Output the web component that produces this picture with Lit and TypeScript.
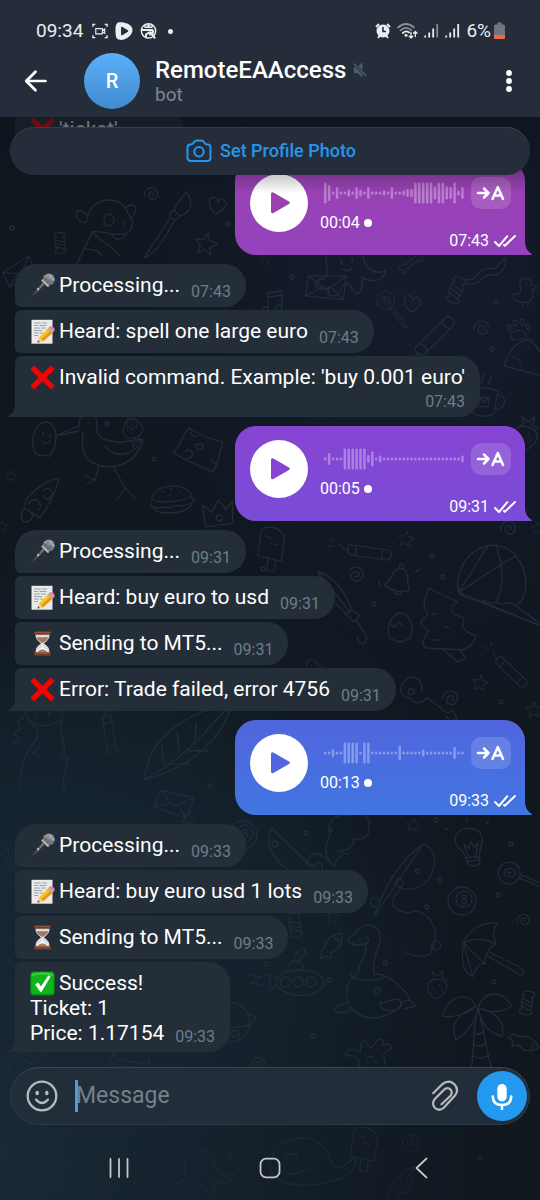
import { LitElement, html, svg, css, nothing } from "lit";
import type { TemplateResult } from "lit";
import { customElement, property } from "lit/decorators.js";
import { classMap } from "lit/directives/class-map.js";

/* ---------- emoji ---------- */

const emoji: Record<string, () => TemplateResult> = {
  mic: () => html`<svg viewBox="0 0 25 25" role="img" aria-label="microphone">
    <path d="M11.500 8 L17 13.500 L3.500 23.800 Q1.300 25.200 .4 24.400 Q-.2 23.500 1 21.500Z" fill="#2e2f32" />
    <path d="M12.500 9.500 L14.500 11.500 L2.500 23Z" fill="#6f7174" />
    <path d="M7.300 15.300 L9 17" stroke="#d4d7d9" stroke-width="1.300" />
    <circle cx="18.700" cy="6.600" r="6" fill="#777c80" />
    <path d="M14 3.500 Q17 0 21 1.300 Q24.700 4 24.300 8 Q18 6 14 3.500" fill="#a3a8ab" />
    <path d="M14 4 L21 12 M16 2 L23.500 10 M13 7 L18 12.500 M23 4 L16 11 M20 1.500 L14 8" stroke="#55595c" stroke-width=".6" />
    <path d="M12.300 7.300 L18 13" stroke="#b9bdc0" stroke-width="1.800" stroke-linecap="round" />
  </svg>`,
  memo: () => html`<svg viewBox="0 0 25 25" role="img" aria-label="memo">
    <rect x="1.500" y=".8" width="21" height="23.900" fill="#e9eaea" />
    <path d="M4 4h7m1 0h5M4 6.500h4m1.500 0h7M4 9h6m1 0h5M4 11.500h8M4 14h5m1 0h3M4 16.500h4" stroke="#8b8e90" stroke-width=".8" />
    <path d="M7.500 23.500 L9 18.500 L18 9.300 L22.500 13.700 L13 22.500Z" fill="#fbc22d" />
    <path d="M11 20.500 L20.200 11.500 L22.500 13.700 L13 22.500Z" fill="#e8971a" />
    <path d="M7.500 23.500 L9 18.500 L13 22.500Z" fill="#f0d3a4" />
    <path d="M7.500 23.500 L8.100 21.300 L9.700 22.900Z" fill="#3b3835" />
    <path d="M17.500 9.800 L18.700 8.500 L23.300 13 L22 14.300Z" fill="#9db4bd" />
    <path d="M18.700 8.500 L20 7.300 Q22 6.500 23.500 8.300 Q25.200 10 24.500 11.800 L23.300 13Z" fill="#f1868d" />
  </svg>`,
  cross: () => html`<svg viewBox="0 0 25 25" role="img" aria-label="cross mark">
    <path d="M.3 4.300 L4 .5 L12.500 8.700 L21 .5 L24.700 4.300 L16.300 12.500 L24.700 20.700 L21 24.500 L12.500 16.300 L4 24.500 L.3 20.700 L8.700 12.500Z" fill="#f00505" />
  </svg>`,
  hourglass: () => html`<svg viewBox="0 0 25 25" role="img" aria-label="hourglass">
    <path d="M5.500 3 H19.500 Q20 8.500 14 12.500 Q20 16 19.500 22 H5.500 Q5 16 11 12.500 Q5 8.500 5.500 3Z" fill="#d5dde1" />
    <path d="M6.500 6.300 H18.500 Q17.300 9.700 12.500 12 Q7.700 9.700 6.500 6.300Z" fill="#a9745a" />
    <path d="M12.500 11.500 L13.200 17 Q17.500 18 18.300 21.500 H6.700 Q7.500 18 11.800 17Z" fill="#fff" />
    <path d="M7 21.500 Q12.500 15 18 21.500Z" fill="#b17b5c" />
    <rect x="4" y=".4" width="17" height="3.300" rx="1.300" fill="#6e3c27" />
    <rect x="4" y="21.300" width="17" height="3.400" rx="1.300" fill="#6e3c27" />
    <path d="M5 1.300H20M5 22.200H20" stroke="#a96946" stroke-width=".7" />
  </svg>`,
  check: () => html`<svg viewBox="0 0 25 25" role="img" aria-label="check mark">
    <rect x=".3" y=".4" width="24.400" height="24.200" rx="3.500" fill="#078a10" />
    <rect x="1.300" y="1" width="22.400" height="22.300" rx="3" fill="#0eb41a" />
    <path d="M2 3 Q12 0 23 3 V5 Q12 2 2 5Z" fill="#5edc5e" opacity=".6" />
    <path d="M5 13.500 L8.300 11.500 L10.900 15.500 L18.300 4.600 L20.500 5.700 L11.600 20.700 H10.200Z" fill="#fff" />
  </svg>`,
};

/* ---------- wallpaper ---------- */

type Spot = [x: number, y: number, turn?: number, size?: number];

const shapes: Record<string, string> = {
  dot: "M-2 0a2 2 0 1 0 4 0a2 2 0 1 0-4 0",
  star: "M0-11L3-4L11-3L5 3L7 10L0 6L-7 10L-5 3L-11-3L-3-4Z",
  heart: "M0 8C-12 0-9-8-4-8C-1-8 0-5 0-4C1-7 4-8 6-7C11-4 8 3 0 8Z",
  swirl: "M-7 3C-8-5-1-9 4-6C10-2 7 6 2 6C-3 6-4 0-1-2C2-4 5 0 2 2",
  candy: "M-4-8C-8-6-8-12-3-13L4-13C8-12 8-6 4-8C7-3 7 3 4 8C8 7 8 12 3 13H-3C-8 12-8 7-4 8C-7 3-7-3-4-8M-5-4L5-1M-6 0L6 4M-5 4L4 8",
  fish: "M-14 3L-8 0C-4-8 5-10 12-8C13-1 7 7-3 6L-6 12L-9 8L-15 9ZM6-9C4-5 6-2 10-1M8-5v.5",
  bone: "M-12-4C-17-12-6-13-7-6L9 4C14 1 18 8 12 9C13 15 5 16 5 9L-10-1C-16 2-18-3-12-4",
  lolly: "M-12-12a11 11 0 1 0 22 0a11 11 0 1 0-22 0M-6-12C-6-18 4-18 5-11C5-6-3-6-3-11C-2-15 2-12 0-11M5-3L24 22M8-5L27 20L24 22",
  burger: "M-20-3C-18-18 16-18 20-2C14 3-14 3-20-3M-21 0C-24 6-18 5-14 7C-8 4-5 9 0 7C6 4 9 9 13 6C20 6 24 3 20-1M-19 6C-18 14 16 16 19 6M-8-9h1M0-11h1M8-8h1M-2-5h1",
  pizza: "M-16 6C-16-2 4-16 21-18C17-4 8 8-2 20L-17 8M-12 5a6 6 0 1 1 9 7M4-7a5 5 0 1 1-1 5M-16 8C-24 15-20 25-14 22C-8 20-9 14-11 13",
  bell: "M-12 6C-4 3-8-11 2-12C13-12 9 3 14 8C7 12-5 12-12 6ZM-2 10C0 16 6 14 6 11M1-12C-1-18 5-18 5-12M-18 4L-16 8M17-10l4-4",
  mug: "M-12-10C-6-13 10-13 14-10L12 13C6 17-6 17-10 13ZM14-6C25-9 24 9 12 8M-4-2L5-3L6 6L-4 7ZM-4-2L1 2L5-3M-3-16C-6-20 0-22-3-26M5-16C2-20 8-22 5-26",
  envelope: "M-20-8L18-10L16 14L-22 12ZM-20-8L-1 5L18-10M-22 12L-6 3M16 14L4 3",
  berry: "M-12-3C-8-11 6-12 12-4C14 6 4 14-1 15C-9 12-13 4-12-3M-9-7L-3-12L-6-19L1-14L7-20L6-12L12-9M-5 0v2M3-3v2M-1 6v2M6 3v2",
  paw: "M-7 6C-8 0 6-2 8 5C8 11 3 8 0 9C-3 10-6 11-7 6M-11-2a2 3 0 1 0 4 0a2 3 0 1 0-4 0M-5-7a2 3 0 1 0 4 0a2 3 0 1 0-4 0M2-8a2 3 0 1 0 4 0a2 3 0 1 0-4 0M8-3a2 3 0 1 0 4 0a2 3 0 1 0-4 0",
  planet: "M-18 0a18 18 0 1 0 36 0a18 18 0 1 0-36 0M-17-6C-30-2-22 8-3 6C18 3 32-8 16-9M-8-10a3 3 0 1 0 6 0a3 3 0 1 0-6 0M2 10a4 3 0 1 0 8 0a4 3 0 1 0-8 0",
  bulb: "M-6 12C-5 6-15 2-14-7C-13-21 13-20 13-5C13 3 7 6 8 13ZM-6 12L-4 19C-2 22 6 22 7 19L8 13M-5 16H8M-3 11L-6-1L-1 3L1-3L4 3L8-1L4 12M-20-18l-3-3M0-24v-4M19-18l3-3",
  ball: "M-14 0a14 14 0 1 0 28 0a14 14 0 1 0-28 0M-6-2a8 8 0 1 0 16 0a8 8 0 1 0-16 0M2-2a2 2 0 1 0 .1-4a2 2 0 1 0 0 4a2.500 2.500 0 1 0 .1 0",
  brolly: "M-17 4C-20-16 0-32 22-30C14-18 18-12 20-6C12-4 8 4 8 16C2 12-2 20-6 30C-18 24-18 12-17 4ZM-16-8L8 16M-16-8C-4-14 10-12 20-6M-16-8L-6 30M12 2L46 19C54 22 50 32 44 26L10 6",
  nessie: "M-14 8C-14-2-6-10-6-20C-6-24-10-22-14-21C-26-20-26-31-16-32C-12-46 10-44 8-26C4-10 0-4 2 8C18 8 34 24 38 34C26 34 32 42 24 44C4 58-18 52-24 36C-28 26-24 12-14 8M-20 8C-30 14 18 18 10 8M-24 36L-38 42C-36 50-24 46-20 44M8 36C14 40 20 30 28 34C32 46 16 48 8 40ZM38 34L44 40L32 43M2 25a3 3 0 1 0 6 0a3 3 0 1 0-6 0M-12-27v3M-6-30l3 3M-20-23C-14-20-6-21-3-25",
  sub: "M-24 0C-22-16 22-16 24 0C22 18-20 18-24 0ZM-12-12C-14-24 4-24 3-12M-6-20C-6-28-2-32 4-34L6-28C2-27 0-24-1-20M-24-4L-30-7V8L-24 4M-20 0a5 5 0 1 0 10 0a5 5 0 1 0-10 0M-7 0a5 5 0 1 0 10 0a5 5 0 1 0-10 0M6 0a5 5 0 1 0 10 0a5 5 0 1 0-10 0M-52-6q4-3 7 0t7 0t6 0M-50 2q4-3 7 0t7 0",
  palm: "M-5 60C-1 40-4 20 2-2C8 20 10 40 16 60M0-4C-8-20-28-14-34 6C-22 8-8 4 0-4C-20 6-26 14-20 30C-8 22 0 10 2-2C8-20 26-20 36-4C24 4 10 2 2-2C20 2 30 12 26 26C12 24 4 10 2-2M-3 22C2 26 6 24 8 20M-3 34C2 38 8 36 10 32M-3 46C4 50 10 48 13 44",
  stork: "M-14-22C-16-38 6-38 4-22C2-8 14-8 24-6C36-4 44-12 50-8C46 10 28 22 8 18C-10 14-12 0-10-16M-14-22L-38-12L-14-17M12-2C24 12 40 6 46-4M6 18L2 32L-8 28M2 32L-6 36M20 18L32 40L42 50M32 40L24 52M-4-26v1",
  dog: "M-18-6C-12-28 18-26 22-8C30-2 26 14 16 12C4 14-4 8-14 10C-22 30-30 40-34 54M-18-6C-30-20-34-4-24 0C-20 2-18-2-18-6M20-14C30-24 34-8 24-4M-2-2a5 6 0 1 0 10 0a5 6 0 1 0-10 0M18 0v3M6 12C8 20 20 18 20 10M-14 10C-4 20 8 26 14 34M-22 26C-12 30-8 26-4 34",
  brush: "M16-34C24-24 22-14 10-10L4-16C6-24 12-26 16-34ZM4-16C0-14-1-10 0-8C4-5 8-6 10-10M0-8L-26 32C-16 28-8 18 4-5",
  ghost: "M-8 14C-16 0-12-18 0-18C12-16 14 6 6 16C2 12-2 20-8 14ZM-3-8v3M4-7v3M-3 1C0 5 4 3 5 0",
  pillow: "M-24 2C-14-6-16-14-8-22C2-16 14-10 26-8C22 2 24 8 16 22C6 16-8 14-24 2ZM-6-18a5 5 0 0 0 7 4M2 0C-4-4-2-8 2-5C6-8 9-3 2 0M-12 2a4 4 0 1 1 3 6M14 8a5 5 0 0 0 5 5",
  tree: "M-12-42L18-28C10-24 10-20 14-16L24-12C22-4 20 0 36 6C34 14 30 18 22 20L-14 18C-22 12-12 6-12 0C-24-6-18-10-12-16C-20-28-14-30-12-42M4 20L18 32L26 28L20 20M-8-16h5M4-4l5 2M-6 10h5",
  chute: "M-34 16C-38-26 4-44 24-20C40 0 34 24 24 30C16 22 12 32 4 26C-2 30-6 22-12 26C-20 22-26 24-34 16ZM-34 16C-20-2-12-20-4-30M24-20C-4-6-20 10-34 16M4-32C12-6 12 10 4 26M-34 16L54 52M-12 26L54 52M24 30L54 52",
  tube: "M-22-7L20-3C26-1 24 8 18 8L-22 4C-26 2-26-6-22-7M-18-7C-14-4-14 2-18 4M16-3C12 0 12 6 16 8M-24-2C-32 2-32-10-36-6M-40-10l-4-3M-42-4h-4",
  closed: "M-32-34C-20-32-6-18 2 4L-4 8C-20-8-30-22-32-34ZM-32-34L0 6M-4 8L4 16L10 10L2 4M6 14C14 26 22 34 12 38C6 36 8 30 8 30",
  boat: "M-28-34C-36-20-30-6-12 8M-28-34L10 4M-25-30L14 6M-28-18a3 3 0 1 0 6 0a3 3 0 1 0-6 0M6 2C12-14 20-8 28-2L34 4M34 4C38-6 44-10 48-8M14 6C14-2 24-2 22 8M28-2C22-16 30-22 30-28C24-44 44-50 50-46C64-54 74-40 68-34C72-26 58-20 54-24C54-12 44-12 38-10",
  rod: "M-40 44C-28 10-12-18 14-36C32-34 32-2 12 10C-8 20-24 6-12 2C-2 4-12 16-18 22C-24 36-6 42 4 38C18 38 36 54 24 82C20 92-2 88-6 82M-40 44L14-36M24 76a5 5 0 1 0 10 0a5 5 0 1 0-10 0M-44 28a5 5 0 1 0 10 0a5 5 0 1 0-10 0",
  dino: "M-20-30C-10-44 16-40 18-26C12-16 18-4 20 10C26 24 14 36 20 50M-20-30C-14-12-6-20-8-4C-18 10-28 24-24 50M-8-28v3M4-30v3M-12-20C-4-14 10-16 14-22M-22-24l-6 4l4 6l-7 5l5 6l-6 6M-4 4l-8 8l6 2M16 12l8 6",
  leaf: "M-40 34C-36 0-10-24 40-36C32-2 2 24-40 34ZM-40 34C-10 20 14-6 40-36M-22 20l-2-18M-8 10l-2-18M6-2l2-16M-18 20l18 0M0 8h18",
  guitar: "M-8 10C-20 10-24 24-14 28C-8 34 2 30 2 20C8 14 4 6-2 4L10-20L6-24L14-30L18-24L12-18M-8 20a3 3 0 1 0 6 0a3 3 0 1 0-6 0",
  octo: "M-14 6C-24-20 12-30 16-4C18 6 30 8 34 4C32 16 20 14 14 10C16 22 10 28 6 20C2 12-2 16-4 22C-10 30-18 24-12 18C-22 24-30 14-20 12C-16 12-16 8-14 6M-3-4v3M6-5v3M-2 3C2 6 5 4 6 2",
  whale: "M-34 10C-40-14-4-34 18-14C26-6 24 6 34 8C44 4 46-2 52-2C50 10 42 18 30 20C6 28-28 28-34 10M-20-2C-18-8-10-8-8-2M-30 12C-16 16-4 14 4 8M-20-8v2M-8-8v2",
  pop: "M-12-16C-4-24 12-18 14-8L10 18L-16 12ZM-4 14L-6 28L2 30L4 16M-8-10l8 2M-2-2l8 2",
  note: "M-6 6V-10L8-12V4M-12 7a3 3 0 1 0 6 0a3 3 0 1 0-6 0M2 5a3 3 0 1 0 6 0a3 3 0 1 0-6 0M-6-6L8-8",
  duck: "M-10 4C-4 6-2 0-4-4C-6-14 8-14 8-5C14-4 14-1 8-1C12 6 6 14-2 12C-8 12-12 10-10 4M2-6v1M-2 12v4M4 12v4",
  ribbon: "M-18 12C-6 14-10-2 4-2C14-2 12-14 18-14C20-4 14 4 6 4C-4 4-2 18-18 16Z",
  fin: "M-22 6C-16-12-8-20 4-20C14-12 22 4 24 18L-22 6M2-14v2M-14-4C-8 0-4 0-4 6",
  crown: "M-14 14L-16-8L-7 0L0-12L7-2L14-10L13 12ZM-3 6a3 3 0 1 0 6 0a3 3 0 1 0-6 0",
  egg: "M-12 4C-12-8-4-15 1-15C8-15 13-4 12 4C10 17-10 17-12 4M-10-4l4 3l4-5l5 4",
};

const wallpaper: Record<string, Spot[]> = {
  dot: [[12, 228], [228, 224], [292, 277], [485, 250], [496, 302], [492, 349], [107, 424], [154, 459], [263, 569], [432, 556], [374, 604], [443, 577], [501, 702], [306, 833], [330, 830], [436, 820], [511, 844], [417, 871], [440, 880], [427, 907], [498, 895], [385, 963], [266, 964], [329, 980], [313, 1036], [494, 982], [10, 960], [114, 1053], [50, 1139], [210, 786], [500, 758], [230, 1157], [480, 1158]],
  star: [[206, 244, 12], [406, 539, 8, 0.7], [480, 683, 10, 0.7], [413, 825, 10, 0.6], [333, 917, 10, 0.6], [11, 476, 0, 0.5], [2, 526, 0, 0.5], [537, 528, 0, 0.5], [534, 710, 0, 0.7], [188, 818, 20, 0.6]],
  heart: [[217, 206, 10], [412, 304, 8], [132, 424, 0, 0.7]],
  swirl: [[151, 194, 0, 0.9], [481, 328], [356, 574, 60], [450, 698, 20], [523, 920, 0, 0.8], [508, 528], [258, 1064, 0, 0.9], [15, 1190, 30]],
  candy: [[60, 243, -4, 0.8], [295, 925, -8, 0.9], [527, 1003, 10, 0.9], [456, 290, 20]],
  fish: [[332, 945, -20], [525, 1043, 50]],
  bone: [[410, 262, -70, 0.8], [262, 256, 20, 0.6], [10, 860, 30, 0.7]],
  lolly: [[386, 310, 2, 0.8], [516, 883, -30]],
  burger: [[172, 500, -6], [130, 1060, 10]],
  pizza: [[40, 498, -6], [22, 1060, 20, 0.8]],
  bell: [[397, 580, 8]],
  mug: [[483, 400, 6]],
  envelope: [[328, 285, 3], [176, 802, 16, 0.9], [20, 270, -30, 0.8]],
  berry: [[525, 436, 8], [88, 1133, 0, 0.7], [437, 987, 0, 0.8], [133, 430, 160, 0.8]],
  paw: [[518, 330]],
  planet: [[230, 1022, 8, 1.1]],
  bulb: [[470, 845, -8]],
  ball: [[462, 901], [411, 1143, 0, 0.6], [243, 835, 0]],
  brolly: [[478, 950, 0, 0.9]],
  nessie: [[372, 966]],
  sub: [[300, 982]],
  palm: [[476, 1010]],
  stork: [[93, 448]],
  dog: [[106, 222]],
  brush: [[170, 226]],
  ghost: [[45, 440, 10]],
  pillow: [[197, 450]],
  crown: [[219, 512, -4]],
  egg: [[400, 628]],
  tree: [[440, 630]],
  chute: [[492, 576]],
  tube: [[370, 552, 3, 0.9], [435, 335, -50], [512, 672, 38, 0.8], [110, 735, 75, 0.8]],
  closed: [[350, 606]],
  boat: [[300, 862]],
  rod: [[410, 877, 0, 0.9]],
  dino: [[45, 742]],
  leaf: [[188, 742, 0, 1.1], [400, 1190, -20, 0.5]],
  guitar: [[430, 700, 100]],
  octo: [[200, 1170], [345, 265, 0, 1.2], [372, 1060, 180, 0.8]],
  whale: [[305, 1160], [80, 1180, 0, 0.7]],
  pop: [[365, 1145, 0, 0.9], [272, 545, 0, 0.9]],
  note: [[274, 303]],
  duck: [[524, 290], [25, 1155], [310, 670, 0, 0.9]],
  ribbon: [[486, 270, 8]],
  fin: [[526, 360]],
};

@customElement("chat-wallpaper")
export class ChatWallpaper extends LitElement {
  static styles = css`
    :host { display: block; }
    svg { display: block; width: 100%; height: 100%; }
    g { fill: none; stroke: #202d39; stroke-width: 1.300; stroke-linecap: round; stroke-linejoin: round; }
    .faint { stroke: #1b2933; }
  `;

  render() {
    return html`<svg viewBox="0 0 540 1200" preserveAspectRatio="xMidYMid slice" aria-hidden="true">
      <g>
        ${Object.entries(wallpaper).flatMap(([name, spots]) =>
          spots.map(
            ([x, y, turn = 0, size = 1]) => svg`<path
              class=${y > 1126 ? "faint" : "line"}
              d=${shapes[name]}
              transform="translate(${x} ${y}) rotate(${turn}) scale(${size})"
            />`
          )
        )}
      </g>
    </svg>`;
  }
}

/* ---------- text message ---------- */

interface TextMessage {
  kind: "text";
  icon: string;
  lines: string[];
  time: string;
  place: "first" | "middle" | "last";
  wrapTime?: boolean;
}

interface VoiceMessage {
  kind: "voice";
  length: string;
  time: string;
  tone: "magenta" | "violet" | "blue";
  wave: number[];
}

@customElement("text-message")
export class TextMessageElement extends LitElement {
  @property({ attribute: false }) message!: TextMessage;

  static styles = css`
    :host { display: block; max-width: 94%; }
    .bubble {
      position: relative;
      display: flex;
      gap: 11px;
      box-sizing: border-box;
      min-height: 43px;
      padding: 9px 15px 6px;
      border-radius: 6px 21px 21px 6px;
      background: #232e39;
      color: #fff;
      font-size: 21px;
      line-height: 25px;
    }
    .first { border-top-left-radius: 21px; }
    .last { border-bottom-left-radius: 0; }
    .wrap { flex-direction: column; gap: 3px; }
    p { margin: 0; }
    .line { display: flex; gap: 4px; }
    .line svg { flex: none; width: 25px; height: 25px; }
    time {
      align-self: flex-end;
      font-size: 16px;
      line-height: 18px;
      color: #6f7c88;
    }
    .tail {
      position: absolute;
      left: -7px;
      bottom: 0;
      width: 7px;
      height: 12px;
      fill: #232e39;
    }
  `;

  render() {
    const { icon, lines, time, place, wrapTime } = this.message;
    return html`<div class=${classMap({ bubble: true, [place]: true, wrap: !!wrapTime })}>
      <div>
        ${lines.map(
          (line, i) => html`<p class="line">${i === 0 ? emoji[icon]() : nothing}<span>${line}</span></p>`
        )}
      </div>
      <time>${time}</time>
      ${place === "last"
        ? html`<svg class="tail" viewBox="0 0 7 12" aria-hidden="true"><path d="M7 0 C7 6 4 9 0 11 Q0 12 1 12 H7Z" /></svg>`
        : nothing}
    </div>`;
  }
}

/* ---------- voice message ---------- */

@customElement("voice-message")
export class VoiceMessageElement extends LitElement {
  @property({ attribute: false }) message!: VoiceMessage;

  static styles = css`
    :host { display: block; width: 290px; }
    .bubble {
      position: relative;
      box-sizing: border-box;
      padding: 14px 14px 5px 15px;
      border-radius: 21px 21px 0 21px;
      background: linear-gradient(var(--from), var(--to));
      color: #fff;
      font-size: 16px;
      line-height: 18px;
    }
    .magenta { --from: #9c40b0; --to: #9343bd; }
    .violet { --from: #8744d2; --to: #794dd7; }
    .blue { --from: #5166de; --to: #4175e0; }
    .row { display: flex; align-items: flex-start; }
    button {
      display: block;
      flex: none;
      padding: 0;
      border: 0;
      cursor: pointer;
    }
    .play { width: 58px; height: 58px; border-radius: 50%; background: #fff; }
    .play svg { display: block; width: 58px; height: 58px; fill: var(--from); }
    .track { flex: 1; display: flex; flex-direction: column; gap: 5px; padding: 3px 0 0 12px; }
    .wave { display: block; width: 145px; height: 32px; fill: #fff; fill-opacity: .33; }
    .length { display: flex; align-items: center; gap: 4px; }
    .unheard { width: 8px; height: 8px; border-radius: 50%; background: #fff; }
    .transcribe { width: 40px; height: 32px; margin-top: 3px; border-radius: 10px; background: rgba(255, 255, 255, .15); }
    .transcribe svg { display: block; width: 40px; height: 32px; fill: none; stroke: #fff; stroke-width: 2.500; stroke-linecap: round; stroke-linejoin: round; }
    .meta { display: flex; justify-content: flex-end; align-items: center; gap: 5px; margin-right: -5px; }
    .ticks { width: 22px; height: 14px; fill: none; stroke: #fff; stroke-width: 2; stroke-linecap: round; stroke-linejoin: round; }
    .tail { position: absolute; right: -7px; bottom: 0; width: 7px; height: 14px; fill: var(--to); }
  `;

  render() {
    const { length, time, tone, wave } = this.message;
    return html`<div class="bubble ${tone}">
      <div class="row">
        <button class="play" aria-label="Play voice message">
          <svg viewBox="0 0 58 58"><path d="M21 20 Q21 17.500 23.300 18.500 L39 27.500 Q40.800 28.700 39 30 L23.300 39 Q21 40 21 37.500Z" /></svg>
        </button>
        <div class="track">
          <svg class="wave" viewBox="0 0 145 32" aria-hidden="true">
            ${wave.map(
              (h, i) => svg`<rect x=${4 + i * 3.92} y=${16 - h / 2} width="2.500" height=${h} rx="1.200" />`
            )}
          </svg>
          <div class="length"><span>${length}</span><span class="unheard"></span></div>
        </div>
        <button class="transcribe" aria-label="Transcribe">
          <svg viewBox="0 0 40 32"><path d="M7 16H17.500M13 11.500L17.500 16L13 20.500M21.500 22L26.800 10L32 22M23.500 18.500H30" /></svg>
        </button>
      </div>
      <div class="meta">
        <time>${time}</time>
        <svg class="ticks" viewBox="0 0 22 14" role="img" aria-label="Read"><path d="M1 8L5 12L13.300 2.200M10 11L10.800 11.800L21 2" /></svg>
      </div>
      <svg class="tail" viewBox="0 0 7 14" aria-hidden="true"><path d="M0 0 C0 7 3 11 7 13 Q7 14 6 14 H0Z" /></svg>
    </div>`;
  }
}

/* ---------- status bar ---------- */

@customElement("status-bar")
export class StatusBar extends LitElement {
  static styles = css`
    :host {
      display: flex;
      justify-content: space-between;
      padding: 17px 35px 0 36px;
      height: 28px;
      font-size: 19px;
      line-height: 28px;
      color: #eceef0;
    }
    div { display: flex; align-items: center; }
    svg { display: block; height: 20px; fill: none; stroke: #eceef0; }
    .left { gap: 7px; }
    .shot { margin-left: 2px; }
    .dot { width: 5px; height: 5px; margin-left: 4px; border-radius: 50%; background: #eceef0; }
    .right { gap: 6px; }
    .battery { margin-left: -3px; }
  `;

  render() {
    const bars = (last: string) => html`<svg width="15" viewBox="0 0 15 20">
      <path d="M1.200 16.500V14.500M5.200 16.500V11.500M9.200 16.500V7.500" stroke-width="1.800" />
      <path d="M13.200 16.500V3" stroke-width="1.800" stroke=${last} />
    </svg>`;
    return html`
      <div class="left">
        <span>09:34</span>
        <svg class="shot" width="16" viewBox="0 0 17 20" stroke-width="1.200">
          <path d="M1 5.500V3H3.500M13.500 3H16V5.500M16 14.500V17H13.500M3.500 17H1V14.500" stroke-width="1.500" />
          <path d="M4 7.500H11V13H4ZM11 9.500L13.500 8V12.500L11 11" />
        </svg>
        <svg width="18" viewBox="0 0 18 20">
          <path d="M3 1.500C8 .5 16 2.500 17.300 7.500C18.500 12 14 17 9 18.500C5 19.500 1 19 .7 14C.3 9 0 3 3 1.500Z" fill="#eceef0" stroke="none" />
          <path d="M6.800 6.500L12.500 10L6.800 13.500Z" fill="#262d3a" stroke="#262d3a" stroke-width="1.500" stroke-linejoin="round" />
        </svg>
        <svg width="17" viewBox="0 0 17 20">
          <circle cx="8.500" cy="9.800" r="7.200" stroke-width="1.400" />
          <path d="M4 4.500Q8.500 1.500 13 4.500L12.500 7H4.500Z" fill="#eceef0" stroke="none" />
          <path d="M2 9H12Q13.500 9.500 13 11.500L9 11.500L6 13.500V16M9 13.500H12.500L15 17.500" stroke-width="2" />
          <path d="M5.500 5H7.500M9.500 5H11.500" stroke="#262d3a" stroke-width="1" />
        </svg>
        <span class="dot"></span>
      </div>
      <div class="right">
        <svg width="16" viewBox="0 0 16 20">
          <circle cx="8" cy="10" r="6.500" fill="#eceef0" stroke="none" />
          <path d="M8 6V10.500H11" stroke="#262d3a" stroke-width="1.600" />
          <path d="M1 6L4 3M15 6L12 3M3 17L4.500 15M13 17L11.500 15" stroke-width="2" />
        </svg>
        <svg width="21" viewBox="0 0 21 20" stroke-linecap="round">
          <path d="M1 6.500Q9 -.5 17 6.500M3.500 9.300Q9 4.500 14.500 9.300" stroke="#8b9097" stroke-width="1.700" />
          <path d="M5.800 12Q9 9 12 11.500" stroke-width="1.800" />
          <circle cx="9" cy="14.300" r="1.500" fill="#eceef0" stroke="none" />
          <path d="M14 11.500V17M12.300 15.300L14 17L15.700 15.300M18.300 15.500V10.500M16.600 12.200L18.300 10.500L20 12.200" stroke-width="1.300" />
        </svg>
        ${bars("#858b93")} ${bars("#eceef0")}
        <span>6%</span>
        <svg class="battery" width="11" viewBox="0 0 11 20">
          <path d="M3.500 1.500H7.500V3.500H9.500Q11 3.500 11 5V14H0V5Q0 3.500 1.500 3.500H3.500Z" fill="#70767f" stroke="none" />
          <path d="M0 14H11V17Q11 18 10 18H1Q0 18 0 17Z" fill="#f0683c" stroke="none" />
        </svg>
      </div>`;
  }
}

/* ---------- page ---------- */

const rep = (h: number, n: number): number[] => Array(n).fill(h);

const conversation: (TextMessage | VoiceMessage)[] = [
  {
    kind: "voice", length: "00:04", time: "07:43", tone: "magenta",
    wave: [21, 16, 3, 12, 3, 3, 7, 3, 12, 7, 3, 12, 3, 3, 3, 5, 3, 12, 3, 3, 5, 8, 8, 21, 21, 21, 21, 21, 13, 21, 21, 13, 12, 21, 5, 12],
  },
  { kind: "text", icon: "mic", lines: ["Processing..."], time: "07:43", place: "first" },
  { kind: "text", icon: "memo", lines: ["Heard: spell one large euro"], time: "07:43", place: "middle" },
  { kind: "text", icon: "cross", lines: ["Invalid command. Example: 'buy 0.001 euro'"], time: "07:43", place: "last", wrapTime: true },
  {
    kind: "voice", length: "00:05", time: "09:31", tone: "violet",
    wave: [3, 12, 3, 3, 3, ...rep(21, 6), 8, 15, 3, 7, ...rep(3, 20), 7],
  },
  { kind: "text", icon: "mic", lines: ["Processing..."], time: "09:31", place: "first" },
  { kind: "text", icon: "memo", lines: ["Heard: buy euro to usd"], time: "09:31", place: "middle" },
  { kind: "text", icon: "hourglass", lines: ["Sending to MT5..."], time: "09:31", place: "middle" },
  { kind: "text", icon: "cross", lines: ["Error: Trade failed, error 4756"], time: "09:31", place: "last" },
  {
    kind: "voice", length: "00:13", time: "09:33", tone: "blue",
    wave: [3, 3, 8, 3, 3, ...rep(21, 4), 3, 21, 21, ...rep(3, 7), 15, ...rep(3, 5), 7, ...rep(3, 7), 12, 3, 3],
  },
  { kind: "text", icon: "mic", lines: ["Processing..."], time: "09:33", place: "first" },
  { kind: "text", icon: "memo", lines: ["Heard: buy euro usd 1 lots"], time: "09:33", place: "middle" },
  { kind: "text", icon: "hourglass", lines: ["Sending to MT5..."], time: "09:33", place: "middle" },
  { kind: "text", icon: "check", lines: ["Success!", "Ticket: 1", "Price: 1.17154"], time: "09:33", place: "last" },
];

const earlier: TextMessage = { kind: "text", icon: "cross", lines: ["'ticket'"], time: "07:42", place: "last" };

@customElement("app-root")
export class AppRoot extends LitElement {
  static styles = css`
    :host {
      position: relative;
      display: flex;
      flex-direction: column;
      height: 100vh;
      overflow: hidden;
      font-family: Roboto, "Noto Sans", sans-serif;
      background:
        radial-gradient(ellipse 90% 40% at 0% 96%, #192936 0%, transparent 100%),
        radial-gradient(ellipse 55% 40% at 75% 22%, #151b2c 0%, transparent 100%),
        radial-gradient(ellipse 80% 26% at 10% 72%, #152430 0%, transparent 100%),
        #10171f;
    }
    button { display: block; padding: 0; border: 0; background: none; cursor: pointer; }
    svg { display: block; }
    chat-wallpaper { position: absolute; inset: 0; }

    .top { position: relative; flex: none; background: #262d3a; }
    header { display: flex; align-items: center; height: 72px; padding: 0 19px 0 24px; color: #fff; }
    .back svg { width: 24px; height: 24px; }
    .avatar {
      display: grid;
      place-items: center;
      width: 56px;
      height: 56px;
      margin: 0 15px 0 36px;
      border-radius: 50%;
      background: linear-gradient(#5caffa, #408acf);
      font-size: 20px;
      font-weight: 500;
    }
    .who { flex: 1; display: flex; flex-direction: column; padding-top: 2px; }
    h1 { display: flex; align-items: center; gap: 7px; margin: 0; font-size: 24px; line-height: 26px; font-weight: 500; }
    h1 svg { width: 14px; height: 16px; }
    .kind { font-size: 19px; line-height: 24px; color: #7a8894; }
    .more svg { width: 24px; height: 24px; fill: #fff; }

    main {
      position: relative;
      flex: 1;
      min-height: 0;
      display: flex;
      flex-direction: column;
      justify-content: flex-end;
      overflow: hidden;
      padding: 0 15px 15px;
    }
    ol { display: flex; flex-direction: column; gap: 3px; margin: 0; padding: 0; list-style: none; }
    li { display: flex; }
    .mine { justify-content: flex-end; margin: 6px 0; }
    .shade {
      position: absolute;
      inset: 0 0 auto;
      height: 76px;
      background: linear-gradient(rgba(15, 20, 29, .65), rgba(15, 20, 29, .3) 70%, transparent);
    }
    .photo {
      position: absolute;
      top: 10px;
      left: 10px;
      right: 10px;
      display: flex;
      align-items: center;
      justify-content: center;
      gap: 8px;
      height: 48px;
      padding-left: 2px;
      border-radius: 24px;
      background: #262d3a;
      box-shadow: inset 0 1px #373e4a;
      font: 500 18px/24px Roboto, "Noto Sans", sans-serif;
      color: #2398ee;
    }
    .photo svg { width: 26px; height: 24px; fill: none; stroke: #2398ee; stroke-width: 2; stroke-linejoin: round; }

    .composer {
      position: relative;
      flex: none;
      display: flex;
      align-items: center;
      box-sizing: border-box;
      height: 58px;
      margin: 0 10px;
      padding: 0 2px 0 15px;
      border: 1px solid #2d3945;
      border-top-color: #3b4651;
      border-radius: 29px;
      background: #222d3a;
    }
    .smile svg { width: 32px; height: 32px; }
    .field { position: relative; flex: 1; min-width: 0; margin: 0 16px 0 17px; }
    .caret { position: absolute; left: 0; top: 0; width: 3px; height: 32px; background: #4a9ee0; }
    input {
      display: block;
      box-sizing: border-box;
      width: 100%;
      height: 32px;
      padding: 0 0 0 1px;
      border: 0;
      outline: 0;
      background: none;
      color: #fff;
      font: 23px/32px Roboto, "Noto Sans", sans-serif;
    }
    input::placeholder { color: #73808d; opacity: 1; }
    .clip svg { width: 28px; height: 32px; }
    .record { width: 50px; height: 50px; margin-left: 18px; border-radius: 50%; background: #2399f0; }
    .record svg { width: 50px; height: 50px; }

    nav {
      position: relative;
      flex: none;
      display: grid;
      grid-template-columns: repeat(3, 28%);
      justify-content: center;
      box-sizing: border-box;
      height: 75px;
      padding-top: 31px;
    }
    nav svg { width: 24px; height: 24px; margin: 0 auto; fill: none; stroke: #c3c6c9; stroke-width: 1.800; stroke-linecap: round; stroke-linejoin: round; }
    nav button { height: 24px; }
  `;

  private row(m: TextMessage | VoiceMessage) {
    return m.kind === "voice"
      ? html`<li class="mine"><voice-message .message=${m}></voice-message></li>`
      : html`<li><text-message .message=${m}></text-message></li>`;
  }

  render() {
    return html`
      <chat-wallpaper></chat-wallpaper>
      <div class="top">
        <status-bar></status-bar>
        <header>
          <button class="back" aria-label="Back">
            <svg viewBox="0 0 24 24" fill="none" stroke="#fff" stroke-width="2.700" stroke-linecap="round" stroke-linejoin="round"><path d="M21.500 12H2.500M11.500 2.700L2.200 12L11.500 21.300" /></svg>
          </button>
          <span class="avatar">R</span>
          <div class="who">
            <h1>RemoteEAAccess
              <svg viewBox="0 0 14 16" role="img" aria-label="Muted"><path d="M1 5H4L9.500 .5V15L4 11H1Z" fill="#4f5c6b" /><path d="M.3 1L13.500 14.500" stroke="#262d3a" stroke-width="3" /><path d="M.8 1.500L13.300 14" stroke="#4f5c6b" stroke-width="1.500" /></svg>
            </h1>
            <span class="kind">bot</span>
          </div>
          <button class="more" aria-label="More options">
            <svg viewBox="0 0 24 24"><circle cx="12" cy="4" r="2.900" /><circle cx="12" cy="12" r="2.900" /><circle cx="12" cy="20" r="2.900" /></svg>
          </button>
        </header>
      </div>
      <main>
        <ol>${this.row(earlier)}${conversation.map((m) => this.row(m))}</ol>
        <div class="shade"></div>
        <button class="photo">
          <svg viewBox="0 0 26 24"><path d="M1.500 8.500Q1.500 5.500 4.500 5.500Q6.500 5.500 7.500 3.800Q8.700 1.500 11 1.500H15Q17.300 1.500 18.500 3.800Q19.500 5.500 21.500 5.500Q24.500 5.500 24.500 8.500V18.500Q24.500 22 21 22H5Q1.500 22 1.500 18.500Z" /><circle cx="13" cy="12.700" r="4.700" /></svg>
          Set Profile Photo
        </button>
      </main>
      <div class="composer">
        <button class="smile" aria-label="Emoji">
          <svg viewBox="0 0 32 32" fill="none" stroke="#b6babd" stroke-width="2.300" stroke-linecap="round"><circle cx="16" cy="16" r="14.300" /><path d="M10 19.500Q16 26.500 22 19.500" /><ellipse cx="11.200" cy="13" rx="1.800" ry="2.200" fill="#b6babd" stroke="none" /><ellipse cx="20.800" cy="13" rx="1.800" ry="2.200" fill="#b6babd" stroke="none" /></svg>
        </button>
        <div class="field">
          <input type="text" placeholder="Message" aria-label="Message" />
          <span class="caret"></span>
        </div>
        <button class="clip" aria-label="Attach">
          <svg viewBox="0 0 28 32" fill="none" stroke="#b6babd" stroke-width="2.200" stroke-linecap="round" stroke-linejoin="round"><path d="M2.200 13.200L11.500 4Q17.500 -.5 23 3.800Q28.500 9.500 24 15.500L12.500 28Q8 31.500 4 28Q.3 24 3.500 19.300L13 9.700Q16.500 6.800 19.500 9.500Q22 12.500 19.500 15.800L10.500 24.300" /></svg>
        </button>
        <button class="record" aria-label="Record voice message">
          <svg viewBox="0 0 50 50"><rect x="20.300" y="13" width="9.400" height="17.500" rx="4.700" fill="#fff" /><path d="M15.800 25.500Q16 34 25 34Q34 34 34.200 25.500M25 34V38" fill="none" stroke="#fff" stroke-width="2.600" stroke-linecap="round" /></svg>
        </button>
      </div>
      <nav aria-label="System">
        <button aria-label="Recents"><svg viewBox="0 0 24 24"><path d="M3.500 3V21M12 3V21M20.500 3V21" /></svg></button>
        <button aria-label="Home"><svg viewBox="0 0 24 24"><rect x="2.500" y="2.700" width="19" height="18.600" rx="5.500" /></svg></button>
        <button aria-label="Back"><svg viewBox="0 0 24 24"><path d="M17.500 2.500L7.500 12L17.500 21.500" /></svg></button>
      </nav>
    `;
  }
}
